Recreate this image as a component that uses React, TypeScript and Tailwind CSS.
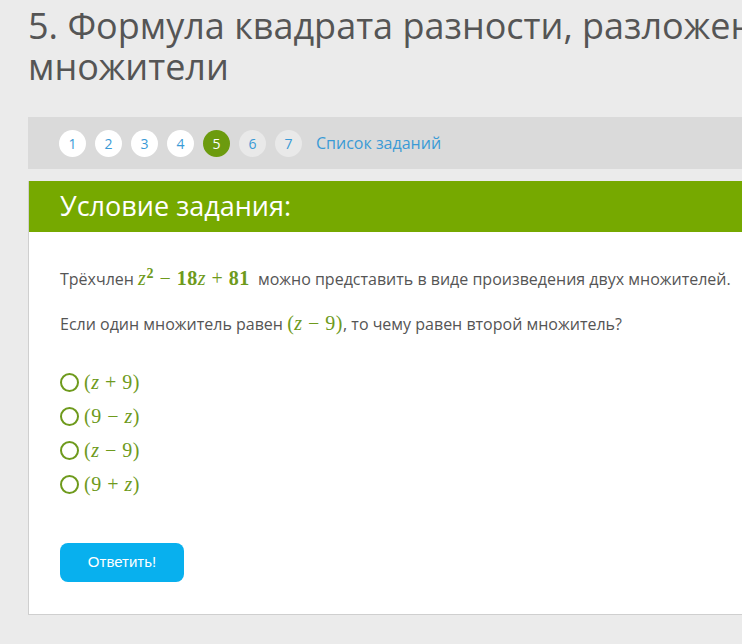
const green = "text-[#6e9a1c]";

const Z = () => <span className="italic">z</span>;

const M = ({ children }: { children: React.ReactNode }) => (
  <span className={`${green} font-['Liberation_Serif',serif] text-[20px] tracking-[0.5px]`}>{children}</span>
);

const pages = [1, 2, 3, 4, 5, 6, 7];

const options = [
  <>(<Z /> + 9)</>,
  <>(9 − <Z />)</>,
  <>(<Z /> − 9)</>,
  <>(9 + <Z />)</>,
];

export default function App() {
  return (
    <div className="w-[742px] h-[644px] overflow-hidden bg-[#ebebeb] font-['Open_Sans',sans-serif]">
      <div className="w-[900px] pl-[28px]">
        <h1 className="pt-[5px] text-[36px] leading-[41px] text-[#555]">
          5. Формула квадрата разности, разложение на множители
        </h1>

        <nav className="mt-[30px] h-[52px] bg-[#dadada] flex items-center pl-[31px] gap-[9px]">
          {pages.map((n) => (
            <div
              key={n}
              className={
                "w-[27px] h-[27px] rounded-full flex items-center justify-center text-[14px] " +
                (n === 5
                  ? "bg-[#6c9b0e] text-white"
                  : n > 5
                  ? "bg-[#e9e9e9] text-[#3a9ad6]"
                  : "bg-white text-[#3a9ad6]")
              }
            >
              {n}
            </div>
          ))}
          <span className="ml-[5px] text-[16px] text-[#3a9ad6]">Список заданий</span>
        </nav>

        <div className="mt-[12px] h-[434px] bg-white border-l border-b border-[#cfcfcf]">
          <div className="h-[51px] bg-[#76a900] flex items-center pl-[31px] text-[27px] text-white">
            Условие задания:
          </div>
          <div className="pl-[31px] pt-[31px] text-[16px] text-[#555]">
            <p className="leading-[30px]">
              Трёхчлен{" "}
              <M>
                <Z />
                <sup className="text-[14px] font-bold">2</sup> − <b>18</b>
                <Z /> + <b>81</b>
              </M>
              {"  "}
              <span className="ml-[4px]">можно представить в виде произведения двух множителей.</span>
            </p>
            <p className="mt-[14px] leading-[30px]">
              Если один множитель равен{" "}
              <M>
                (<Z /> − 9)
              </M>
              , то чему равен второй множитель?
            </p>

            <div className="mt-[31px] flex flex-col gap-[10px]">
              {options.map((o, i) => (
                <label key={i} className="flex items-center gap-[5px] h-[24px]">
                  <span className="w-[19px] h-[19px] rounded-full border-2 border-[#6e9a1c]" />
                  <M>{o}</M>
                </label>
              ))}
            </div>

            <button className="mt-[47px] w-[124px] h-[39px] rounded-[8px] bg-[#08b0ee] text-white text-[15px] font-['Liberation_Sans',sans-serif]">
              Ответить!
            </button>
          </div>
        </div>
      </div>
    </div>
  );
}
